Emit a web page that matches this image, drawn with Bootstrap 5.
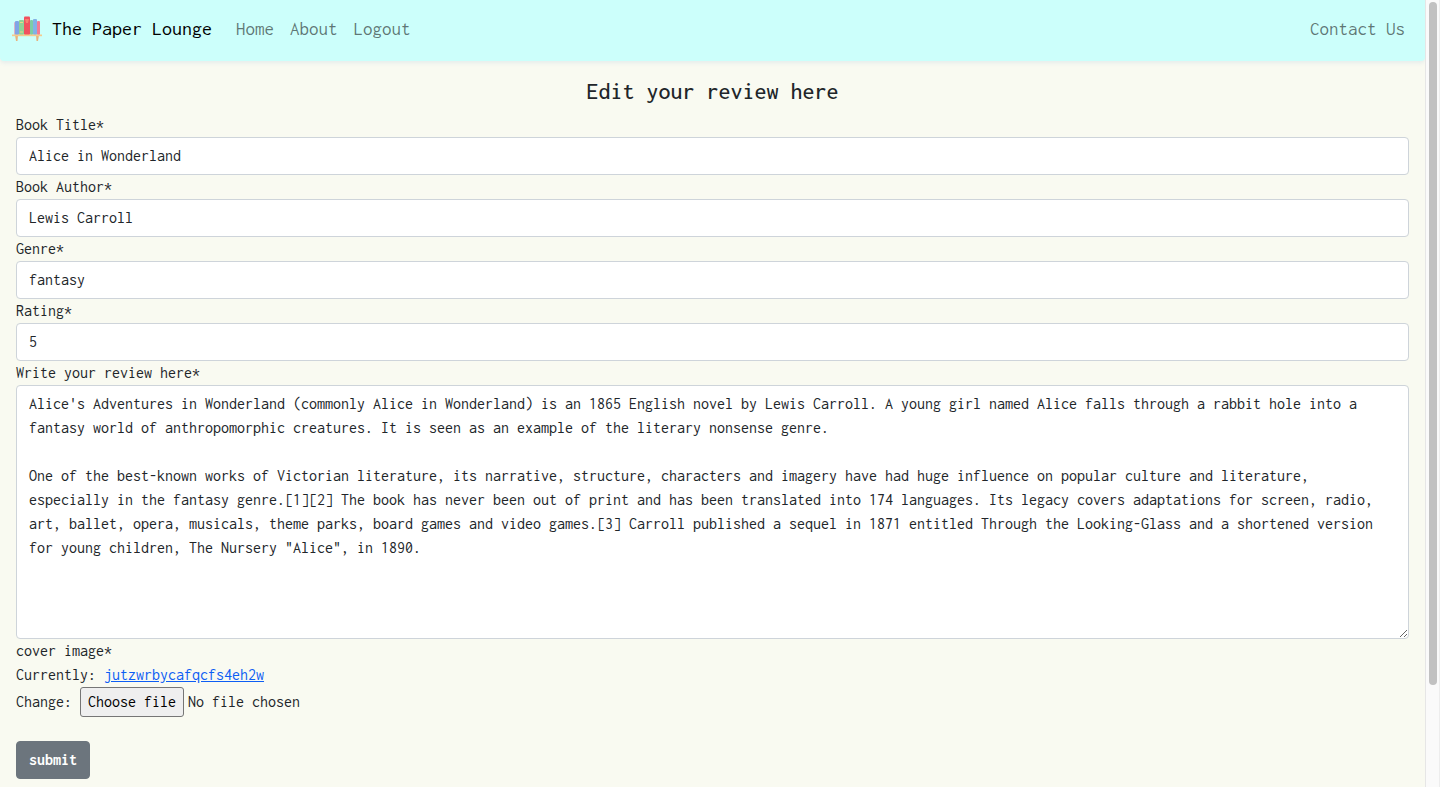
<!DOCTYPE html>
<html lang="en">
<head>
<meta charset="utf-8">
<meta name="viewport" content="width=device-width, initial-scale=1">
<title>The Paper Lounge</title>
<link href="https://cdn.jsdelivr.net/npm/bootstrap@5.3.0/dist/css/bootstrap.min.css" rel="stylesheet">
<style>
  body { font-family: Inconsolata, "Noto Sans Mono CJK SC", "Liberation Mono", monospace; font-size: 16px; background: #f9faf1; color: #212529; }
  .site-nav { background: #ccfffb; padding: 7px 0 10px; border-radius: 0 0 4px 4px; box-shadow: 0 2px 4px rgba(60, 120, 200, .1); }
  .site-nav .navbar-brand { color: #000; font-size: 20px; }
  .site-nav .nav-link { color: rgba(0, 0, 0, .55); font-size: 19px; line-height: 28px; }
  .page-title { font-size: 24px; line-height: 28px; font-weight: 500; }
  .review-form label { line-height: 24px; display: block; }
  .review-form .form-control { height: 38px; border: 1px solid #ced4da; border-radius: 4px; color: #212529; padding: 5px 12px 7px; }
  .review-form textarea.form-control { height: 254px; padding: 6px 12px; }
  .review-form a { color: #0d5ef4; }
  .file-button { height: 30px; background: #efefef; color: #000; border: 1px solid #767676; border-radius: 3px; padding: 1px 7px; }
  .btn-submit, .btn-submit:hover { background: #6c757d; border-color: #6c757d; border-radius: 4px; color: #fff; font-weight: 700; }
  .scroll-track { width: 15px; background: #fafafa; border-left: 1px solid #e6e6e6; border-right: 1px solid #ededed; padding: 2px 2px 2px 3px; }
  .scroll-thumb { width: 8px; height: 87.2%; background: #c1c1c1; border-radius: 4px; }
</style>
</head>
<body>
<div class="d-flex vh-100 overflow-hidden">
  <div class="flex-grow-1 overflow-hidden">
    <nav class="navbar navbar-expand site-nav">
      <div class="container-fluid">
        <a class="navbar-brand d-flex align-items-center gap-2 p-0 me-3" href="#">
          <svg width="32" height="30" viewBox="0 0 32 30" aria-hidden="true">
            <path d="M3 21h3l-.5 6h-1.500zM24 21h3l-1 6h-1.500z" fill="#e8b27c"/>
            <rect x="2" y="8" width="2" height="13" rx="1" fill="#ddb3c8"/>
            <rect x="3" y="7" width="4" height="14" rx="1" fill="#7fa5e6"/>
            <rect x="7" y="6" width="5" height="15" rx="1" fill="#8fd297"/>
            <path d="M8 8.500h3M8 18h3" stroke="#e9d58a"/>
            <rect x="18" y="6" width="3" height="15" rx="1" fill="#7ccda5"/>
            <rect x="21" y="5" width="4" height="16" rx="1" fill="#82b1e6"/>
            <rect x="25" y="7" width="3" height="14" rx="1" fill="#f27c94"/>
            <rect x="12" y="2.500" width="6" height="18.500" rx="1" fill="#f1505f"/>
            <path d="M13 5h4l-1 4h-2z" fill="#f7806f"/>
            <path d="M0 20.500h30v1.700H0z" fill="#f5cb8d"/>
          </svg>
          <span>The Paper Lounge</span>
        </a>
        <ul class="navbar-nav flex-grow-1">
          <li class="nav-item"><a class="nav-link" href="#">Home</a></li>
          <li class="nav-item"><a class="nav-link" href="#">About</a></li>
          <li class="nav-item"><a class="nav-link" href="#">Logout</a></li>
          <li class="nav-item ms-auto"><a class="nav-link" href="#">Contact Us</a></li>
        </ul>
      </div>
    </nav>
    <main class="px-3 pt-3">
      <h1 class="page-title text-center mb-2">Edit your review here</h1>
      <form class="review-form">
        <label for="title">Book Title*</label>
        <input class="form-control" id="title" type="text" value="Alice in Wonderland">
        <label for="author">Book Author*</label>
        <input class="form-control" id="author" type="text" value="Lewis Carroll">
        <label for="genre">Genre*</label>
        <input class="form-control" id="genre" type="text" value="fantasy">
        <label for="rating">Rating*</label>
        <input class="form-control" id="rating" type="text" value="5">
        <label for="review">Write your review here*</label>
        <textarea class="form-control" id="review" rows="10" spellcheck="false">Alice's Adventures in Wonderland (commonly Alice in Wonderland) is an 1865 English novel by Lewis Carroll. A young girl named Alice falls through a rabbit hole into a fantasy world of anthropomorphic creatures. It is seen as an example of the literary nonsense genre.

One of the best-known works of Victorian literature, its narrative, structure, characters and imagery have had huge influence on popular culture and literature, especially in the fantasy genre.[1][2] The book has never been out of print and has been translated into 174 languages. Its legacy covers adaptations for screen, radio, art, ballet, opera, musicals, theme parks, board games and video games.[3] Carroll published a sequel in 1871 entitled Through the Looking-Glass and a shortened version for young children, The Nursery "Alice", in 1890.</textarea>
        <label for="cover">cover image*</label>
        <div>Currently: <a href="#">jutzwrbycafqcfs4eh2w</a></div>
        <div class="d-flex align-items-center mb-4">
          <span class="me-2">Change:</span>
          <input class="d-none" id="cover" type="file" onchange="document.getElementById('cover-name').textContent = this.files.length ? this.files[0].name : 'No file chosen'">
          <button class="file-button me-1" type="button" onclick="document.getElementById('cover').click()">Choose file</button>
          <span id="cover-name">No file chosen</span>
        </div>
        <button class="btn btn-submit" type="submit">submit</button>
      </form>
    </main>
  </div>
  <div class="scroll-track flex-shrink-0" aria-hidden="true"><div class="scroll-thumb"></div></div>
</div>
<script src="https://cdn.jsdelivr.net/npm/bootstrap@5.3.0/dist/js/bootstrap.bundle.min.js"></script>
</body>
</html>
